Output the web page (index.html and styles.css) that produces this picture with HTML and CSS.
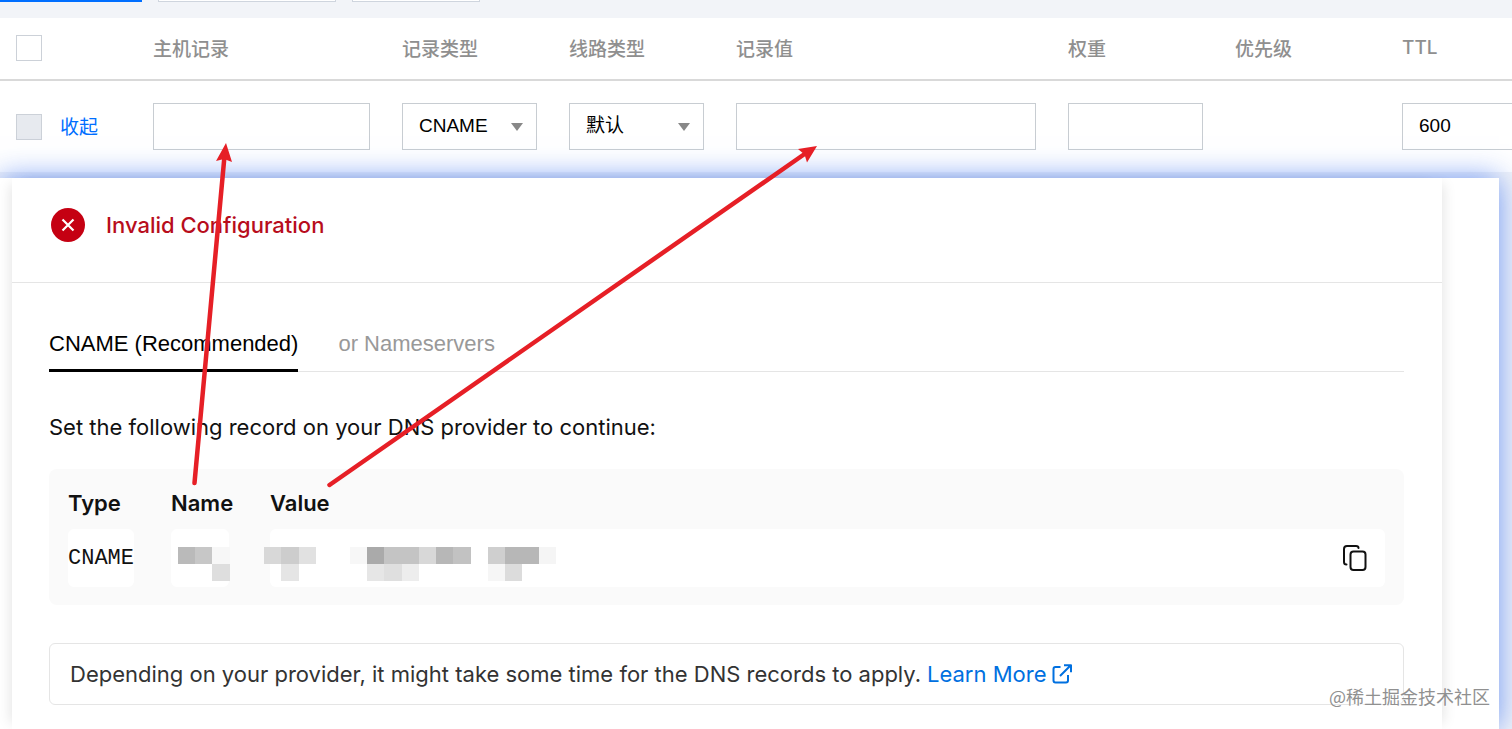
FILE: index.html
```html
<!DOCTYPE html>
<html lang="zh-CN">
<head>
  <meta charset="utf-8">
  <title>DNS CNAME</title>
  <link rel="stylesheet" href="styles.css">
</head>
<body>
  <div class="toolbar">
    <button class="tool primary" aria-label="添加记录"></button>
    <button class="tool wide" aria-label="导入记录"></button>
    <button class="tool" aria-label="更多"></button>
  </div>

  <div class="records">
    <table class="records-table">
      <colgroup>
        <col class="col-first">
        <col class="col-host">
        <col class="col-unit">
        <col class="col-unit">
        <col class="col-value">
        <col class="col-unit">
        <col class="col-unit">
        <col class="col-unit">
      </colgroup>
      <thead>
        <tr>
          <th><input type="checkbox" class="check" aria-label="全选"></th>
          <th>主机记录</th>
          <th>记录类型</th>
          <th>线路类型</th>
          <th>记录值</th>
          <th>权重</th>
          <th>优先级</th>
          <th>TTL</th>
        </tr>
      </thead>
      <tbody>
        <tr>
          <td>
            <div class="row-head">
              <input type="checkbox" class="check" aria-label="选择" disabled>
              <a href="#">收起</a>
            </div>
          </td>
          <td><input type="text" class="field" aria-label="主机记录"></td>
          <td>
            <select class="field" aria-label="记录类型">
              <option>CNAME</option>
            </select>
          </td>
          <td>
            <select class="field" aria-label="线路类型">
              <option>默认</option>
            </select>
          </td>
          <td><input type="text" class="field" aria-label="记录值"></td>
          <td><input type="text" class="field" aria-label="权重"></td>
          <td></td>
          <td><input type="text" class="field" aria-label="TTL" value="600"></td>
        </tr>
      </tbody>
    </table>
  </div>

  <div class="window">
    <div class="card">
      <div class="status">
        <svg width="34" height="34" viewBox="0 0 34 34">
          <circle cx="17" cy="17" r="17" fill="#c50012"/>
          <path d="M11.5 11.5l11 11M22.5 11.5l-11 11" stroke="#fff" stroke-width="2.2"/>
        </svg>
        <span>Invalid Configuration</span>
      </div>

      <div class="content">
        <div class="tabs">
          <button class="tab active">CNAME (Recommended)</button>
          <button class="tab">or Nameservers</button>
        </div>

        <p class="hint">Set the following record on your DNS provider to continue:</p>

        <div class="record">
          <table class="record-table">
            <tr>
              <th class="type">Type</th>
              <th class="name">Name</th>
              <th>Value</th>
            </tr>
            <tr>
              <td><div class="cell">CNAME</div></td>
              <td><div class="cell name-cell"></div></td>
              <td>
                <div class="cell value-cell">
                  <button class="copy" aria-label="Copy">
                    <svg width="26" height="28" viewBox="0 0 26 28" fill="none" stroke="#111" stroke-width="2" stroke-linecap="round">
                      <path d="M4.500 20.500C2.800 20.500 2 19.500 2 18V5C2 3 3 2 5 2h9c1.500 0 2.500.8 2.500 2"/>
                      <rect x="8.500" y="7.500" width="15" height="18.500" rx="3"/>
                    </svg>
                  </button>
                </div>
              </td>
            </tr>
          </table>
          <!-- hidden name and value -->
          <svg class="mosaic" width="380" height="34" viewBox="0 0 380 34" shape-rendering="crispEdges">
            <path fill="#bababa" d="M0 0h17v17H0z"/>
            <path fill="#c7c7c7" d="M17 0h17v17H17z"/>
            <path fill="#f7f7f7" d="M34 0h18v17H34z"/>
            <path fill="#dedede" d="M34 17h18v17H34z"/>
            <path fill="#d8d8d8" d="M86 0h17v17H86z"/>
            <path fill="#cdcdcd" d="M103 0h18v17h-18z"/>
            <path fill="#e1e1e1" d="M121 0h17v17h-17z"/>
            <path fill="#e5e5e5" d="M103 17h18v17h-18z"/>
            <path fill="#f7f7f7" d="M172 0h17v17h-17z"/>
            <path fill="#aaa" d="M189 0h17v17h-17z"/>
            <path fill="#c4c4c4" d="M206 0h35v17h-35z"/>
            <path fill="#d8d8d8" d="M241 0h17v17h-17z"/>
            <path fill="#b7b7b7" d="M258 0h17v17h-17z"/>
            <path fill="#c2c2c2" d="M275 0h18v17h-18z"/>
            <path fill="#e6e6e6" d="M189 17h17v17h-17z"/>
            <path fill="#dfdfdf" d="M206 17h18v17h-18z"/>
            <path fill="#ededed" d="M224 17h17v17h-17z"/>
            <path fill="#cfcfcf" d="M310 0h17v17h-17z"/>
            <path fill="#b7b7b7" d="M327 0h34v17h-34z"/>
            <path fill="#f5f5f5" d="M361 0h17v17h-17z"/>
            <path fill="#f6f6f6" d="M310 17h17v17h-17z"/>
            <path fill="#dcdcdc" d="M327 17h17v17h-17z"/>
          </svg>
        </div>

        <div class="notice">
          <span>Depending on your provider, it might take some time for the DNS records to apply.</span>
          <a href="#">Learn More
            <svg width="20" height="20" viewBox="0 0 20 20" fill="none" stroke="currentColor" stroke-width="2" stroke-linejoin="round">
              <path d="M8.500 3H3.500Q1.500 3 1.500 5v11.500q0 2 2 2H14q2 0 2-2V11M12 1.200h7v7M18.500 1.500L8 12"/>
            </svg>
          </a>
        </div>
      </div>
    </div>
  </div>

  <svg class="arrows" width="1512" height="729" viewBox="0 0 1512 729">
    <g stroke="#e61f26" stroke-width="4.500" stroke-linecap="round">
      <path d="M194.500 483L224.500 156"/>
      <path d="M329.500 485L806 153"/>
    </g>
    <g fill="#e61f26">
      <path d="M226 143L232 162L224 159L216 161z"/>
      <path d="M817 146L807 162.500L804.500 154.500L798 149z"/>
    </g>
  </svg>

  <div class="watermark">@稀土掘金技术社区</div>
</body>
</html>
```

FILE: styles.css
```css
* {
  box-sizing: border-box;
}

body {
  margin: 0;
  height: 100vh;
  display: flex;
  flex-direction: column;
  position: relative;
  overflow: hidden;
  background-color: #f2f4f8;
  font-family: Inter, "Noto Sans CJK SC", sans-serif;
  color: #111;
}

button {
  font-family: inherit;
  cursor: pointer;
}

a {
  color: #006eff;
  text-decoration: none;
}

.toolbar {
  display: flex;
  gap: 16px;
  height: 18px;
  flex-shrink: 0;
}

.tool {
  width: 128px;
  height: 2px;
  padding: 0;
  background-color: #fff;
  border: 1px solid #cfd5de;
  border-top: none;
}

.tool.wide {
  width: 178px;
}

.tool.primary {
  width: 142px;
  background-color: #006eff;
  border-color: #006eff;
}

.records {
  flex-shrink: 0;
  overflow: hidden;
  background-color: #fff;
}

.records-table {
  width: 100%;
  min-width: 1568px;
  table-layout: fixed;
  border-collapse: collapse;
  font-size: 19px;
}

.col-first {
  width: 153px;
}

.col-host {
  width: 249px;
}

.col-unit {
  width: 167px;
}

.col-value {
  width: 332px;
}

.records-table th {
  height: 62px;
  padding: 0 0 2px;
  text-align: left;
  font-weight: 500;
  color: #8f8f8f;
  border-bottom: 2px solid #d9d9d9;
}

.records-table td {
  height: 92px;
  padding: 0 32px 0 0;
}

.records-table th:first-child,
.records-table td:first-child {
  padding-left: 16px;
}

.row-head {
  display: flex;
  align-items: center;
  gap: 18px;
}

.row-head a {
  padding-bottom: 2px;
}

.check {
  appearance: none;
  display: block;
  width: 26px;
  height: 26px;
  margin: 0;
  background-color: #fff;
  border: 1px solid #ccd1d8;
}

.check:disabled {
  background-color: #e7eaef;
}

.field {
  appearance: none;
  display: block;
  width: 100%;
  height: 47px;
  padding: 0 16px 2px;
  border: 1px solid #c8cdd2;
  border-radius: 0;
  background-color: #fff;
  font-family: "Liberation Sans", "Noto Sans CJK SC", sans-serif;
  font-size: 19px;
  color: #000;
}

select.field {
  background-image: url("data:image/svg+xml,%3Csvg xmlns='http://www.w3.org/2000/svg' width='12' height='8'%3E%3Cpath d='M0 0h12L6 8z' fill='%23888'/%3E%3C/svg%3E");
  background-repeat: no-repeat;
  background-position: right 13px center;
}

/* lower window */
.window {
  position: relative;
  flex: 1;
  display: flex;
  margin: 6px 13px 0 0;
  padding: 0 57px 0 12px;
  background-color: #fff;
  box-shadow: 0 0 28px rgba(40, 100, 240, 0.65);
}

.card {
  flex: 1;
  min-width: 0;
  background-color: #fff;
  box-shadow: 8px 0 12px -6px rgba(0, 0, 0, 0.1), -8px 0 12px -6px rgba(0, 0, 0, 0.1);
}

.status {
  display: flex;
  align-items: center;
  gap: 21px;
  height: 105px;
  padding: 0 39px 11px;
  border-bottom: 1px solid #e5e5e5;
  font-size: 22px;
  font-weight: 500;
  color: #b80d1c;
}

.content {
  padding: 36px 38px 0 37px;
}

.tabs {
  display: flex;
  gap: 40px;
  border-bottom: 1px solid #e5e5e5;
}

.tab {
  height: 53px;
  margin-bottom: -1px;
  padding: 0;
  background: none;
  border: none;
  border-bottom: 3px solid transparent;
  font-family: "Liberation Sans", sans-serif;
  font-size: 22px;
  color: #999;
}

.tab.active {
  color: #000;
  border-bottom-color: #000;
}

.hint {
  margin: 40px 0 26px;
  font-size: 22px;
  line-height: 31px;
}

.record {
  position: relative;
  padding: 14px 19px 18px;
  background-color: #fafafa;
  border-radius: 8px;
}

.record-table {
  width: 100%;
  border-collapse: collapse;
  font-size: 22px;
}

.record-table th {
  height: 40px;
  padding: 0;
  text-align: left;
  font-weight: 600;
}

.record-table .type {
  width: 103px;
}

.record-table .name {
  width: 99px;
}

.record-table td {
  padding: 6px 0 0;
}

.cell {
  display: flex;
  align-items: center;
  width: 66px;
  height: 58px;
  background-color: #fff;
  border-radius: 6px;
  font-family: "Liberation Mono", monospace;
}

.name-cell {
  width: 58px;
}

.value-cell {
  width: 100%;
  justify-content: flex-end;
  padding-right: 17px;
}

.copy {
  display: flex;
  padding: 0;
  background: none;
  border: none;
}

.mosaic {
  position: absolute;
  left: 129px;
  top: 78px;
}

.notice {
  display: flex;
  align-items: center;
  gap: 6px;
  height: 62px;
  margin-top: 38px;
  padding: 0 20px;
  border: 1px solid #e5e5e5;
  border-radius: 6px;
  font-size: 22px;
  color: #333;
}

.notice a {
  display: flex;
  align-items: center;
  gap: 6px;
  color: #0070e0;
}

/* drawn over everything */
.arrows {
  position: absolute;
  left: 0;
  top: 0;
  pointer-events: none;
}

.watermark {
  position: absolute;
  right: 22px;
  bottom: 20px;
  font-family: "Noto Sans CJK SC", sans-serif;
  font-size: 18px;
  line-height: 26px;
  color: #909090;
  text-shadow: 1px 1px 1px #fff;
}
```
